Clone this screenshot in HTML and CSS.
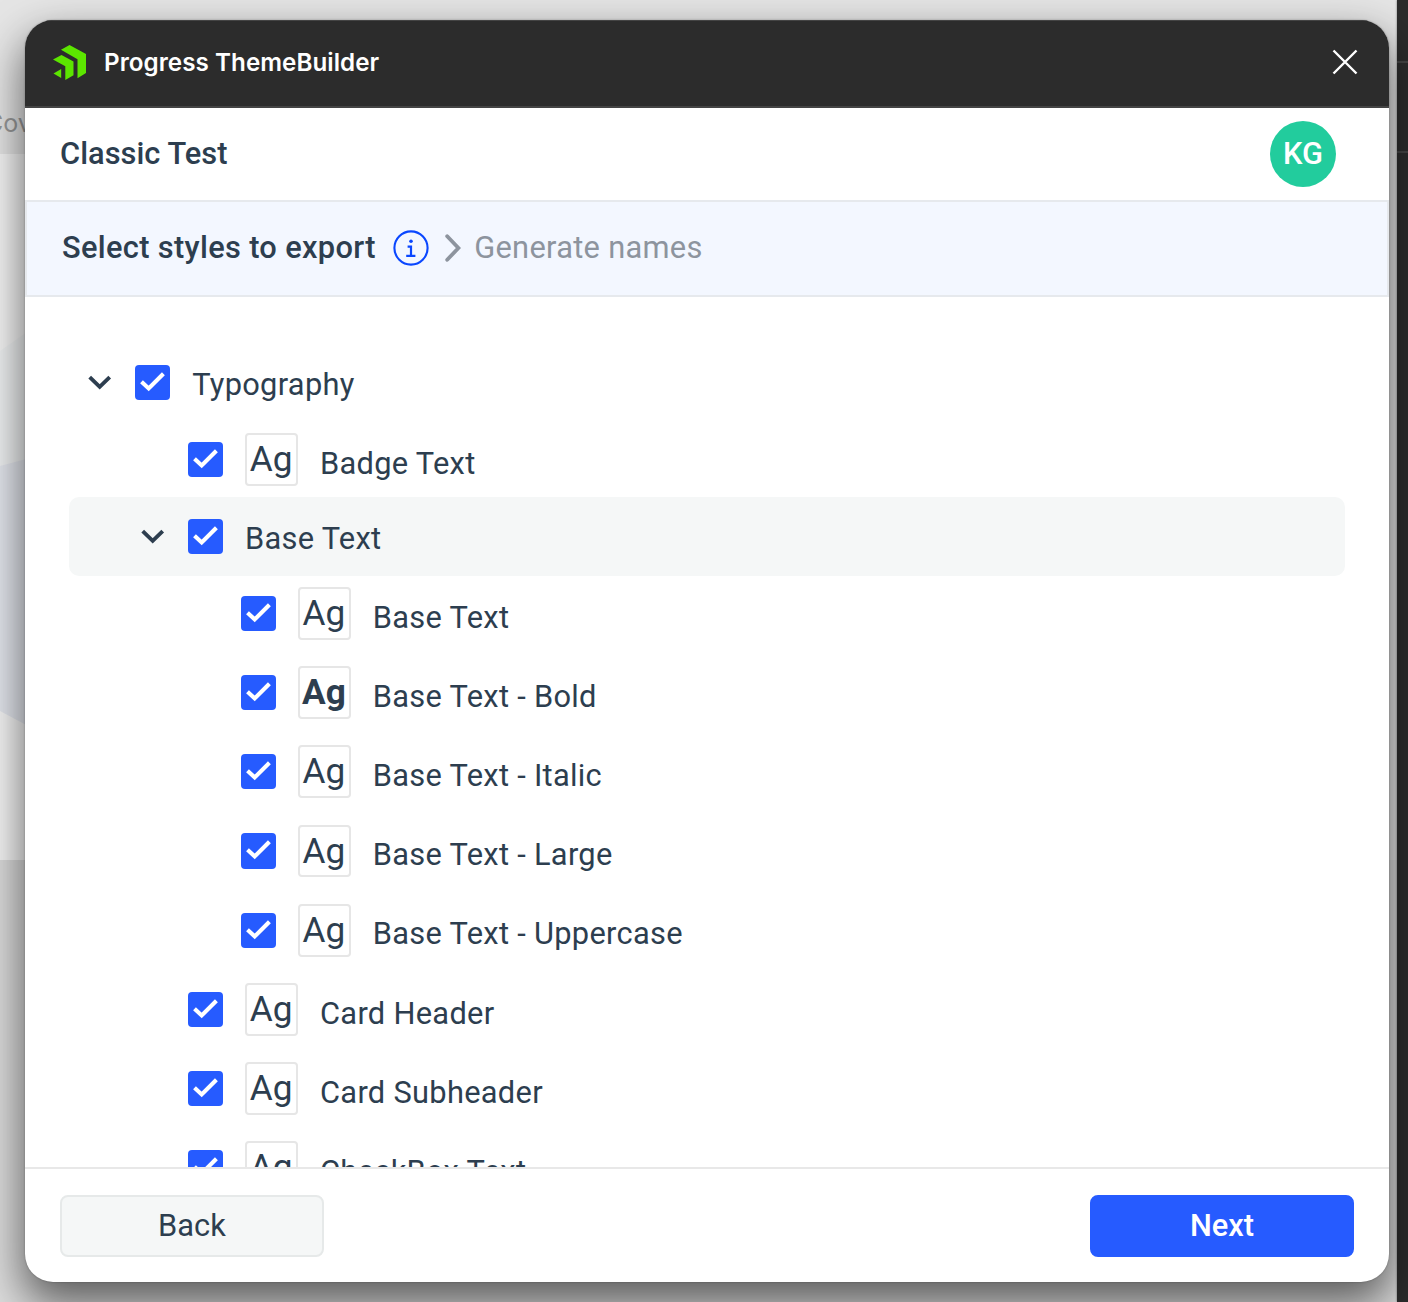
FILE: index.html
```html
<!DOCTYPE html>
<html lang="en">

<head>
  <meta charset="UTF-8">
  <meta name="viewport" content="width=device-width, initial-scale=1.0">
  <link rel="stylesheet" href="styles.css">
  <title>Progress ThemeBuilder</title>
</head>

<body>
  <!-- Canvas behind the plugin window -->
  <div class="canvas">
    <div class="frame-label">Cov</div>
    <svg class="frame-art" width="60" height="706" viewBox="0 154 60 706">
      <rect x="0" y="154" width="60" height="706" fill="#f5f5f5"/>
      <path d="M0 351 L60 309 V470 H0z" fill="#eff1f2"/>
      <path d="M0 466 L60 450 V743 L0 711z" fill="#e4e7ee"/>
    </svg>
    <div class="side-panel">
      <div class="side-line"></div>
      <div class="side-line"></div>
    </div>
  </div>

  <div class="window">
    <header class="titlebar">
      <svg class="logo" width="34" height="36" viewBox="0 0 34 36">
        <path fill="#5ce500" d="M8 4.7 L16.5 0 L33 9 V28 L24.5 33.2 V14.2z"/>
        <path fill="#5ce500" d="M0 14.5 L8.5 10 L20.5 16.6 V30.3 L12.3 35 V21.2z"/>
        <path fill="#5ce500" d="M0.5 28.5 L8.2 24 V33z"/>
      </svg>
      <span class="title">Progress ThemeBuilder</span>
      <svg class="close" width="26" height="26" viewBox="0 0 26 26">
        <path d="M1.5 1.5 L24.5 24.5 M24.5 1.5 L1.5 24.5" stroke="#fff" stroke-width="2.4" fill="none"/>
      </svg>
    </header>

    <div class="project">
      <span class="project-name">Classic Test</span>
      <span class="avatar">KG</span>
    </div>

    <div class="steps">
      <span class="step-active">Select styles to export</span>
      <svg class="info" width="36" height="36" viewBox="0 0 36 36">
        <circle cx="18" cy="18" r="16.6" fill="none" stroke="#0a47ff" stroke-width="2.1"/>
        <circle cx="18" cy="11.3" r="1.8" fill="#0a47ff"/>
        <path d="M14.6 16.6 H18 V25.5 M13.2 25.8 H22.4" fill="none" stroke="#0a47ff" stroke-width="2.2"/>
      </svg>
      <svg class="step-arrow" width="16" height="28" viewBox="0 0 16 28">
        <path d="M2.2 2.2 L13.4 14 L2.2 25.8" fill="none" stroke="#8d949e" stroke-width="3.8" stroke-linecap="round"/>
      </svg>
      <span class="step-next">Generate names</span>
    </div>

    <!-- Styles tree, rows are filled from the script below -->
    <div class="tree" id="tree"></div>

    <footer class="actions">
      <button class="btn">Back</button>
      <button class="btn primary">Next</button>
    </footer>
  </div>

  <script>
    const rows = [
      { text: 'Typography', level: 0, group: true },
      { text: 'Badge Text', level: 1 },
      { text: 'Base Text', level: 1, group: true, hover: true },
      { text: 'Base Text', level: 2 },
      { text: 'Base Text - Bold', level: 2, bold: true },
      { text: 'Base Text - Italic', level: 2 },
      { text: 'Base Text - Large', level: 2 },
      { text: 'Base Text - Uppercase', level: 2 },
      { text: 'Card Header', level: 1 },
      { text: 'Card Subheader', level: 1 },
      { text: 'CheckBox Text', level: 1 }
    ];

    const arrow = '<svg class="arrow" width="24" height="15" viewBox="0 0 24 15"><path d="M1.7 2.2 L11.7 11.8 L21.7 2.2" fill="none" stroke="#2d3e4f" stroke-width="3.9"/></svg>';
    const check = '<span class="checkbox"><svg width="35" height="35" viewBox="0 0 35 35"><path d="M6.5 16.7 L13.7 23.4 L28.4 8.8" fill="none" stroke="#fff" stroke-width="4.1"/></svg></span>';

    document.getElementById('tree').innerHTML = rows.map(function(row) {
      const classes = 'row level-' + row.level + (row.group ? ' group' : '') + (row.hover ? ' hover' : '');
      const preview = '<span class="preview' + (row.bold ? ' bold' : '') + '">Ag</span>';
      return '<div class="' + classes + '">' + (row.group ? arrow : '') + check +
        (row.group ? '' : preview) + '<span class="label">' + row.text + '</span></div>';
    }).join('');
  </script>
</body>

</html>
```
FILE: styles.css
```css
* {
  box-sizing: border-box;
}

body {
  margin: 0;
  height: 1302px;
  padding: 20px 19px 20px 25px;
  overflow: hidden;
  position: relative;
  font-family: Roboto, "Liberation Sans", sans-serif;
  font-size: 30.8px;
  letter-spacing: 0.3px;
  color: #2d3e4f;
}

/* background */
.canvas {
  position: absolute;
  inset: 0;
  background: linear-gradient(#e5e5e5 0 860px, #dcdcdc 860px);
}

.frame-label {
  position: absolute;
  left: -15px;
  top: 108px;
  width: 60px;
  font-family: Inter, sans-serif;
  font-size: 25px;
  line-height: 30px;
  letter-spacing: 0;
  color: #999;
}

.frame-art {
  position: absolute;
  left: 0;
  top: 154px;
}

.side-panel {
  position: absolute;
  right: 0;
  top: 0;
  bottom: 0;
  width: 11px;
  padding-top: 61px;
  background: #2c2c2c;
  box-shadow: 0 0 2px rgba(0, 0, 0, 0.5);
}

.side-line {
  height: 2px;
  margin-bottom: 88px;
  background: #444;
}

/* plugin window */
.window {
  position: relative;
  width: 1364px;
  height: 1262px;
  display: flex;
  flex-direction: column;
  overflow: hidden;
  background: #fff;
  border-radius: 28px;
  box-shadow: 0 0 2px rgba(0, 0, 0, 0.3), 0 20px 44px 2px rgba(0, 0, 0, 0.58);
}

.titlebar {
  flex: none;
  height: 88px;
  display: flex;
  align-items: center;
  padding: 0 31px 2px 28px;
  background: #2c2c2c;
  border-bottom: 2px solid #444;
  box-shadow: inset 0 1px 0 #444;
}

.logo {
  margin-top: 2px;
}

.title {
  margin-left: 17px;
  font-family: Inter, sans-serif;
  font-size: 24.2px;
  font-weight: 600;
  letter-spacing: 0.05px;
  color: #fff;
}

.close {
  margin-left: auto;
}

.project {
  flex: none;
  height: 92px;
  display: flex;
  align-items: center;
  justify-content: space-between;
  padding: 0 53px 0 35px;
  font-weight: 500;
}

.project-name {
  padding-bottom: 2px;
  letter-spacing: 0.04px;
}

.avatar {
  width: 66px;
  height: 66px;
  border-radius: 50%;
  line-height: 66px;
  text-align: center;
  letter-spacing: 0;
  background: #22cc9d;
  color: #fff;
}

.steps {
  flex: none;
  height: 97px;
  display: flex;
  align-items: center;
  padding: 0 35px 3px;
  background: #f3f7ff;
  border: 2px solid #e6e9ed;
}

.step-active {
  font-weight: 500;
  letter-spacing: 0.33px;
}

.info {
  margin: 2px 16px 0 17.4px;
}

.step-arrow {
  margin: 1px 13px 0 0;
}

.step-next {
  color: #8d949e;
}

.tree {
  flex: 1;
  min-height: 0;
  overflow: hidden;
  padding: 50.2px 44px 0;
}

.row {
  height: 79.2px;
  display: flex;
  align-items: center;
  padding-bottom: 4.4px;
}

.row.group {
  height: 74.8px;
}

.row.level-0 {
  padding-left: 19px;
}

.row.level-1 {
  padding-left: 119px;
}

.row.level-1.group {
  padding-left: 71.8px;
}

.row.level-2 {
  padding-left: 171.8px;
}

.row.hover {
  height: 79.2px;
  margin-top: -4.4px;
  padding-bottom: 0;
  background: #f5f7f7;
  border-radius: 10px;
}

.arrow {
  margin-right: 23px;
}

.checkbox {
  width: 35.2px;
  height: 35.2px;
  border-radius: 4px;
  background: #265bff;
}

.checkbox svg {
  display: block;
}

.preview {
  width: 52.8px;
  height: 52.8px;
  margin-left: 22px;
  padding-right: 1px;
  border: 2px solid #e6e6e6;
  border-radius: 4px;
  font-size: 35.2px;
  line-height: 48px;
  text-align: center;
  letter-spacing: 0;
}

.preview.bold {
  font-weight: 700;
}

.label {
  margin-left: 22px;
  padding-top: 7.4px;
}

.row.group .label {
  padding-top: 3.4px;
}

.actions {
  flex: none;
  height: 115px;
  display: flex;
  justify-content: space-between;
  padding: 26px 35px 0;
  border-top: 2px solid #e8e8e8;
}

.btn {
  width: 264px;
  height: 62px;
  padding: 0 0 2px;
  border: 2px solid #e6e9e9;
  border-radius: 8px;
  background: #f5f7f7;
  color: #2d3e4f;
  font: inherit;
  letter-spacing: 0.1px;
}

.btn.primary {
  background: #265bff;
  border-color: #265bff;
  color: #fff;
  font-weight: 500;
  letter-spacing: 0;
}
```
